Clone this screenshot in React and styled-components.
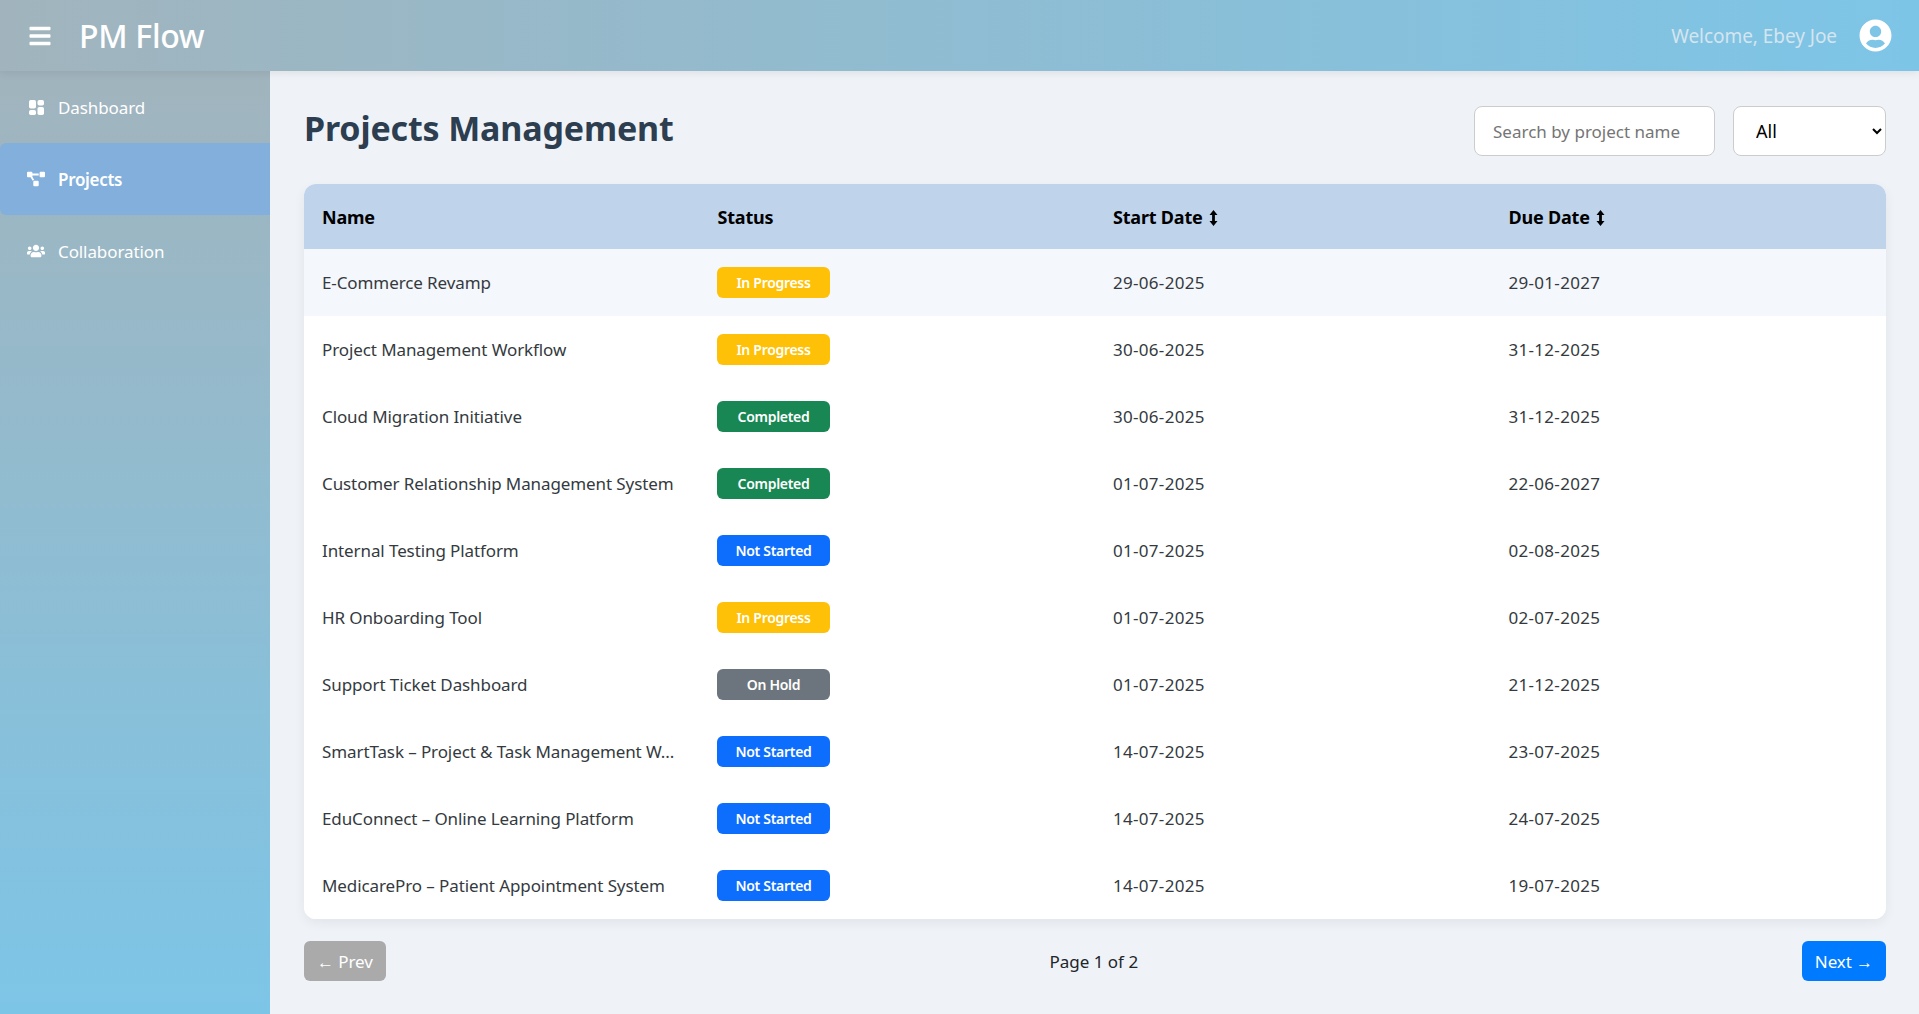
import React from "react";
import styled, { createGlobalStyle } from "styled-components";
import { FaBars, FaProjectDiagram, FaUserCircle, FaUsers } from "react-icons/fa";

const GlobalStyle = createGlobalStyle`
    * { box-sizing: border-box; }
    html, body { margin: 0; height: 100%; }
    body {
        font-family: "Noto Sans", "Open Sans", Arial, sans-serif;
        background: #eff3f8;
        color: #212529;
    }
`

const Page = styled.div`
    display: flex;
    flex-direction: column;
    height: 1014px;
    overflow: hidden;
`
const Header = styled.header`
    display: flex;
    align-items: center;
    justify-content: space-between;
    height: 71px;
    flex-shrink: 0;
    padding: 0 27px 0 28px;
    color: #fff;
    background: linear-gradient(to right, #a1b4bd, #7dc5e7);
    box-shadow: 0 2px 8px rgba(0, 0, 0, 0.08);
    position: relative;
    z-index: 2;
`
const Brand = styled.div`
    display: flex;
    align-items: center;
    gap: 27px;
`
const Logo = styled.div`
    font-size: 32px;
    font-weight: 500;
    letter-spacing: -0.3px;
`
const UserBox = styled.div`
    display: flex;
    align-items: center;
    gap: 22px;
`
const Welcome = styled.span`
    font-size: 19px;
    letter-spacing: -0.05px;
    color: #d5e5ef;
`
const Body = styled.div`
    display: flex;
    flex: 1;
    min-height: 0;
`
const Sidebar = styled.nav`
    width: 270px;
    flex-shrink: 0;
    background: linear-gradient(to bottom, #a1b4bd, #7dc5e7);
`
const NavItem = styled.div`
    display: flex;
    align-items: center;
    gap: 13px;
    height: 72px;
    padding-left: 27px;
    font-size: 17px;
    letter-spacing: ${(p) => (p.$active ? "-0.3px" : "-0.1px")};
    font-weight: ${(p) => (p.$active ? 600 : 400)};
    color: #fff;
    background: ${(p) => (p.$active ? "#82afdb" : "transparent")};
    border-radius: ${(p) => (p.$active ? "6px 0 0 6px" : "0")};
`
const NavIcon = styled.span`
    display: flex;
    justify-content: center;
    width: 18px;
    font-size: 18px;
`
const Main = styled.main`
    flex: 1;
    min-width: 0;
    padding: 35px 33px 0 34px;
`
const TopRow = styled.div`
    display: flex;
    align-items: center;
    justify-content: space-between;
    height: 50px;
    margin-bottom: 28px;
`
const Title = styled.h1`
    margin: 0 0 6px;
    font-size: 34px;
    font-weight: 700;
    letter-spacing: -0.15px;
    color: #2c3e50;
`
const Filters = styled.div`
    display: flex;
    gap: 18px;
`
const Search = styled.input`
    width: 241px;
    height: 50px;
    padding: 0 18px;
    font: inherit;
    font-size: 17px;
    background: #fff;
    border: 1px solid #ccc;
    border-radius: 8px;
    &::placeholder { color: #757575; opacity: 1; }
`
const Select = styled.select`
    width: 153px;
    height: 50px;
    padding: 0 18px;
    font: inherit;
    font-size: 18px;
    color: #000;
    background: #fff;
    border: 1px solid #ccc;
    border-radius: 8px;
`
const TableCard = styled.div`
    background: #fff;
    border-radius: 12px;
    overflow: hidden;
    box-shadow: 0 4px 12px rgba(0, 0, 0, 0.06);
`
const Table = styled.table`
    width: 100%;
    border-collapse: collapse;
    table-layout: fixed;
`
const Th = styled.th`
    height: 65px;
    padding: 0 18px;
    text-align: left;
    font-size: 18px;
    font-weight: 700;
    letter-spacing: -0.2px;
    color: #000;
    background: #bfd3eb;
`
const Row = styled.tr`
    background: ${(p) => (p.$first ? "#f4f7fb" : "#fff")};
`
const Td = styled.td`
    height: 67px;
    padding: 0 18px;
    font-size: 17px;
    letter-spacing: ${(p) => (p.$date ? "0.3px" : "-0.1px")};
    color: #343a40;
    white-space: nowrap;
`
const badgeColors = {
    "In Progress": "#ffc107",
    Completed: "#198754",
    "Not Started": "#0d6efd",
    "On Hold": "#6c757d",
}
const Badge = styled.span`
    display: flex;
    align-items: center;
    justify-content: center;
    width: 113px;
    height: 31px;
    margin-left: -0.5px;
    font-size: 14px;
    font-weight: 600;
    letter-spacing: -0.3px;
    color: #fff;
    border-radius: 6px;
    background: ${(p) => badgeColors[p.$status]};
`
const SortMark = styled.svg`
    width: 9px;
    height: 16px;
    margin-left: 6px;
    vertical-align: -2px;
`
const Pager = styled.div`
    display: flex;
    align-items: center;
    justify-content: space-between;
    margin-top: 22px;
`
const PageButton = styled.button`
    height: 40px;
    padding: 0 13px;
    font: inherit;
    font-size: 17px;
    letter-spacing: -0.1px;
    color: #fff;
    border: none;
    border-radius: 6px;
    background: ${(p) => (p.disabled ? "#aaa" : "#007bff")};
`
const PageText = styled.span`
    font-size: 17px;
    color: #212529;
`

const projects = [
    ["E-Commerce Revamp", "In Progress", "29-06-2025", "29-01-2027"],
    ["Project Management Workflow", "In Progress", "30-06-2025", "31-12-2025"],
    ["Cloud Migration Initiative", "Completed", "30-06-2025", "31-12-2025"],
    ["Customer Relationship Management System", "Completed", "01-07-2025", "22-06-2027"],
    ["Internal Testing Platform", "Not Started", "01-07-2025", "02-08-2025"],
    ["HR Onboarding Tool", "In Progress", "01-07-2025", "02-07-2025"],
    ["Support Ticket Dashboard", "On Hold", "01-07-2025", "21-12-2025"],
    ["SmartTask – Project & Task Management W...", "Not Started", "14-07-2025", "23-07-2025"],
    ["EduConnect – Online Learning Platform", "Not Started", "14-07-2025", "24-07-2025"],
    ["MedicarePro – Patient Appointment System", "Not Started", "14-07-2025", "19-07-2025"],
]

const DashboardIcon = () => (
    <svg width="15" height="15" viewBox="0 0 15 15" fill="currentColor">
        <rect x="0" y="0" width="7" height="8.5" rx="1.8" />
        <rect x="8.5" y="0" width="6.5" height="5.5" rx="1.8" />
        <rect x="0" y="10" width="7" height="5" rx="1.8" />
        <rect x="8.5" y="7" width="6.5" height="8" rx="1.8" />
    </svg>
)

const Sort = () => (
    <SortMark viewBox="0 0 8 16" fill="currentColor">
        <path d="M4 0 L8 5 H5.4 V11 H8 L4 16 L0 11 H2.6 V5 H0 Z" />
    </SortMark>
)

export default function App() {
    return (
        <Page>
            <GlobalStyle />
            <Header>
                <Brand>
                    <FaBars size={24} />
                    <Logo>PM Flow</Logo>
                </Brand>
                <UserBox>
                    <Welcome>Welcome, Ebey Joe</Welcome>
                    <FaUserCircle size={33} />
                </UserBox>
            </Header>
            <Body>
                <Sidebar>
                    <NavItem>
                        <NavIcon><DashboardIcon /></NavIcon>
                        Dashboard
                    </NavItem>
                    <NavItem $active>
                        <NavIcon><FaProjectDiagram /></NavIcon>
                        Projects
                    </NavItem>
                    <NavItem>
                        <NavIcon><FaUsers /></NavIcon>
                        Collaboration
                    </NavItem>
                </Sidebar>
                <Main>
                    <TopRow>
                        <Title>Projects Management</Title>
                        <Filters>
                            <Search placeholder="Search by project name" />
                            <Select defaultValue="All">
                                <option>All</option>
                            </Select>
                        </Filters>
                    </TopRow>
                    <TableCard>
                        <Table>
                            <thead>
                                <tr>
                                    <Th>Name</Th>
                                    <Th>Status</Th>
                                    <Th>Start Date<Sort /></Th>
                                    <Th>Due Date<Sort /></Th>
                                </tr>
                            </thead>
                            <tbody>
                                {projects.map((p, i) => (
                                    <Row key={p[0]} $first={i === 0}>
                                        <Td>{p[0]}</Td>
                                        <Td><Badge $status={p[1]}>{p[1]}</Badge></Td>
                                        <Td $date>{p[2]}</Td>
                                        <Td $date>{p[3]}</Td>
                                    </Row>
                                ))}
                            </tbody>
                        </Table>
                    </TableCard>
                    <Pager>
                        <PageButton disabled>← Prev</PageButton>
                        <PageText>Page 1 of 2</PageText>
                        <PageButton>Next →</PageButton>
                    </Pager>
                </Main>
            </Body>
        </Page>
    );
}
